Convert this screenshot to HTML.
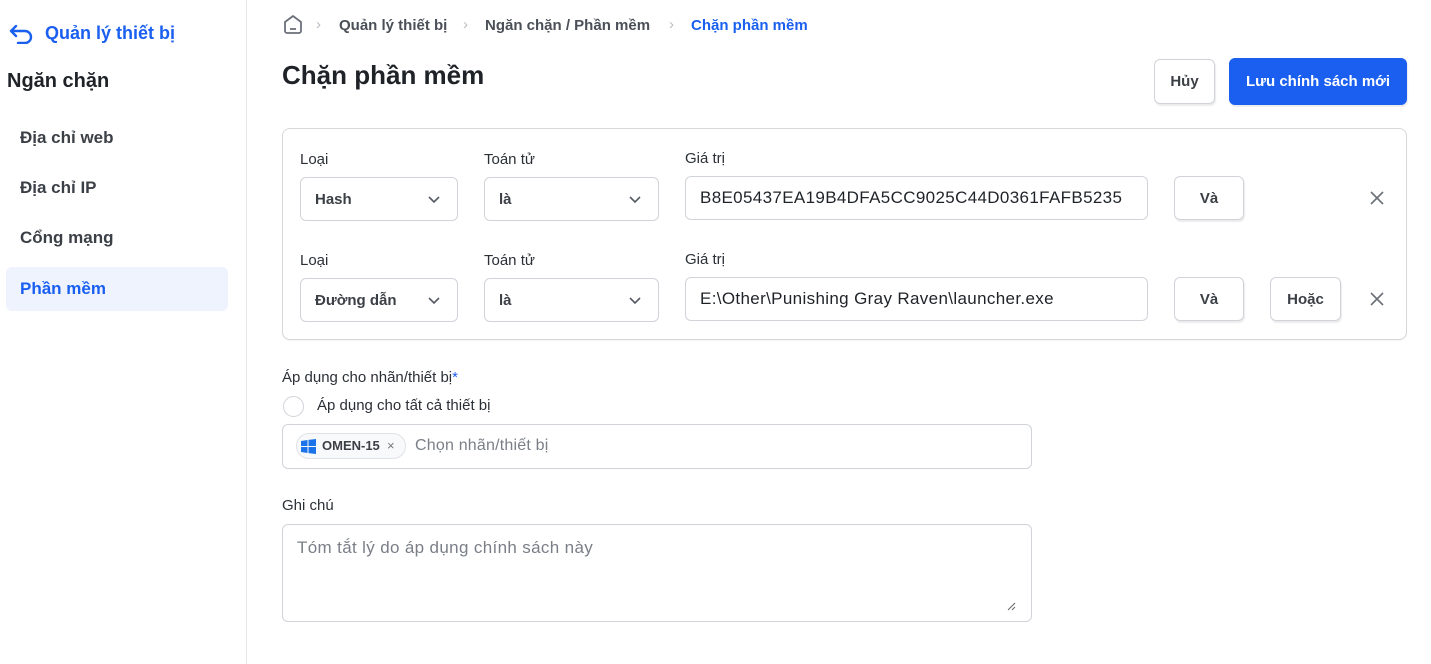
<!DOCTYPE html>
<html><head><meta charset="utf-8"><style>
*{box-sizing:border-box;margin:0;padding:0}
body{width:1431px;height:664px;background:#fff;font-family:"Liberation Sans",sans-serif;color:#1f2328;position:relative;overflow:hidden}
.abs{position:absolute}
.side{position:absolute;left:0;top:0;width:247px;height:664px;border-right:1px solid #e6e7ea}
.nav{position:absolute;left:20px;font-size:17px;font-weight:bold;color:#3b3f46}
.box{position:absolute;border:1px solid #d5d7db;border-radius:8px;background:#fff;box-shadow:0 1px 1px rgba(0,0,0,.04)}
.lbl{position:absolute;font-size:15px;color:#2b2f36}
.in{position:absolute;border:1px solid #d0d3d8;border-radius:6px;height:44px;font-size:15px;display:flex;align-items:center;padding-left:14px}
.val{font-size:17px;letter-spacing:.35px;color:#1f2328}
.btn{position:absolute;border:1px solid #d0d3d8;border-radius:6px;font-size:15px;font-weight:bold;color:#3b3f46;display:flex;align-items:center;justify-content:center;box-shadow:1px 2px 1px rgba(0,0,0,.08)}
.chev{position:absolute;right:16px;top:15px}
</style></head><body>
<div class="side">
  <svg class="abs" style="left:9px;top:24px" width="26" height="20" viewBox="0 0 26 20"><path d="M7 2 L2 7 L7 12 M2 7 H16 a6 6 0 0 1 0 12 H9" fill="none" stroke="#1a5ff0" stroke-width="2.4" stroke-linecap="round" stroke-linejoin="round"/></svg>
  <div class="abs" style="left:45px;top:23px;font-size:18px;font-weight:bold;color:#1a5ff0">Quản lý thiết bị</div>
  <div class="abs" style="left:7px;top:70px;font-size:20px;font-weight:bold;color:#1f2328">Ngăn chặn</div>
  <div class="nav" style="top:128px">Địa chỉ web</div>
  <div class="nav" style="top:178px">Địa chỉ IP</div>
  <div class="nav" style="top:228px">Cổng mạng</div>
  <div class="abs" style="left:6px;top:267px;width:222px;height:44px;background:#eef3fe;border-radius:6px"></div>
  <div class="nav" style="top:279px;color:#1a5ff0">Phần mềm</div>
</div>
<svg class="abs" style="left:283px;top:14px" width="20" height="21" viewBox="0 0 20 21"><path d="M2 8 L10 2 L18 8 V17 a2 2 0 0 1 -2 2 H4 a2 2 0 0 1 -2 -2 Z" fill="none" stroke="#6b7078" stroke-width="1.8" stroke-linejoin="round"/><path d="M7 15 H13" stroke="#6b7078" stroke-width="1.8"/></svg>
<div class="abs" style="left:316px;top:16px;font-size:15px;color:#b8bcc2">›</div>
<div class="abs" style="left:339px;top:17px;font-size:15px;font-weight:bold;color:#4b4f57">Quản lý thiết bị</div>
<div class="abs" style="left:463px;top:16px;font-size:15px;color:#b8bcc2">›</div>
<div class="abs" style="left:485px;top:17px;font-size:15px;font-weight:bold;color:#4b4f57">Ngăn chặn / Phần mềm</div>
<div class="abs" style="left:669px;top:16px;font-size:15px;color:#b8bcc2">›</div>
<div class="abs" style="left:691px;top:17px;font-size:15px;font-weight:bold;color:#1a5ff0">Chặn phần mềm</div>
<div class="abs" style="left:282px;top:60px;font-size:26px;font-weight:bold;color:#1f2328">Chặn phần mềm</div>
<div class="btn" style="left:1154px;top:59px;width:61px;height:45px">Hủy</div>
<div class="btn" style="left:1229px;top:58px;width:178px;height:47px;background:#1a5ff0;border-color:#1a5ff0;color:#fff">Lưu chính sách mới</div>

<div class="box" style="left:282px;top:128px;width:1125px;height:212px"></div>
<div class="lbl" style="left:300px;top:151px">Loại</div>
<div class="lbl" style="left:484px;top:151px">Toán tử</div>
<div class="lbl" style="left:685px;top:150px">Giá trị</div>
<div class="in" style="left:300px;top:177px;width:158px;font-weight:bold;color:#3b3f46">Hash<svg class="chev" width="14" height="14" viewBox="0 0 14 14"><path d="M2 4 L7 9 L12 4" fill="none" stroke="#555a62" stroke-width="1.6"/></svg></div>
<div class="in" style="left:484px;top:177px;width:175px;font-weight:bold;color:#3b3f46">là<svg class="chev" width="14" height="14" viewBox="0 0 14 14"><path d="M2 4 L7 9 L12 4" fill="none" stroke="#555a62" stroke-width="1.6"/></svg></div>
<div class="in val" style="left:685px;top:176px;width:463px">B8E05437EA19B4DFA5CC9025C44D0361FAFB5235</div>
<div class="btn" style="left:1174px;top:176px;width:70px;height:44px">Và</div>
<svg class="abs" style="left:1370px;top:191px" width="14" height="14" viewBox="0 0 14 14"><path d="M1 1 L13 13 M13 1 L1 13" stroke="#6b7078" stroke-width="1.6"/></svg>

<div class="lbl" style="left:300px;top:252px">Loại</div>
<div class="lbl" style="left:484px;top:252px">Toán tử</div>
<div class="lbl" style="left:685px;top:251px">Giá trị</div>
<div class="in" style="left:300px;top:278px;width:158px;font-weight:bold;color:#3b3f46">Đường dẫn<svg class="chev" width="14" height="14" viewBox="0 0 14 14"><path d="M2 4 L7 9 L12 4" fill="none" stroke="#555a62" stroke-width="1.6"/></svg></div>
<div class="in" style="left:484px;top:278px;width:175px;font-weight:bold;color:#3b3f46">là<svg class="chev" width="14" height="14" viewBox="0 0 14 14"><path d="M2 4 L7 9 L12 4" fill="none" stroke="#555a62" stroke-width="1.6"/></svg></div>
<div class="in val" style="left:685px;top:277px;width:463px">E:\Other\Punishing Gray Raven\launcher.exe</div>
<div class="btn" style="left:1174px;top:277px;width:70px;height:44px">Và</div>
<div class="btn" style="left:1270px;top:277px;width:71px;height:44px">Hoặc</div>
<svg class="abs" style="left:1370px;top:292px" width="14" height="14" viewBox="0 0 14 14"><path d="M1 1 L13 13 M13 1 L1 13" stroke="#6b7078" stroke-width="1.6"/></svg>

<div class="abs" style="left:282px;top:369px;font-size:15px;color:#2b2f36">Áp dụng cho nhãn/thiết bị<span style="color:#1a5ff0">*</span></div>
<div class="abs" style="left:283px;top:396px;width:21px;height:21px;border:1px solid #d0d3d8;border-radius:50%"></div>
<div class="abs" style="left:317px;top:397px;font-size:15px;color:#2b2f36">Áp dụng cho tất cả thiết bị</div>
<div class="abs" style="left:282px;top:424px;width:750px;height:45px;border:1px solid #d0d3d8;border-radius:6px"></div>
<div class="abs" style="left:296px;top:433px;width:110px;height:26px;border:1px solid #e0e2e6;border-radius:13px;background:#f8f9fa"></div>
<svg class="abs" style="left:301px;top:439px" width="15" height="15" viewBox="0 0 15 15"><path d="M0 2 L6.5 1 V7 H0Z M7.5 0.9 L15 0 V7 H7.5Z M0 8 H6.5 V14 L0 13Z M7.5 8 H15 V15 L7.5 14.1Z" fill="#1a73e8"/></svg>
<div class="abs" style="left:322px;top:438px;font-size:13px;font-weight:bold;color:#3b3f46">OMEN-15</div>
<div class="abs" style="left:387px;top:438px;font-size:13px;color:#777">×</div>
<div class="abs" style="left:415px;top:437px;font-size:16px;letter-spacing:.2px;color:#7a7f87">Chọn nhãn/thiết bị</div>

<div class="abs" style="left:282px;top:497px;font-size:15px;color:#2b2f36">Ghi chú</div>
<div class="abs" style="left:282px;top:524px;width:750px;height:98px;border:1px solid #d0d3d8;border-radius:6px"></div>
<div class="abs" style="left:297px;top:538px;font-size:17px;letter-spacing:.35px;color:#7a7f87">Tóm tắt lý do áp dụng chính sách này</div>
<svg class="abs" style="left:1006px;top:601px" width="10" height="10" viewBox="0 0 10 10"><path d="M9 2 L2 9 M9 6 L6 9" stroke="#666" stroke-width="1"/></svg>
</body></html>
